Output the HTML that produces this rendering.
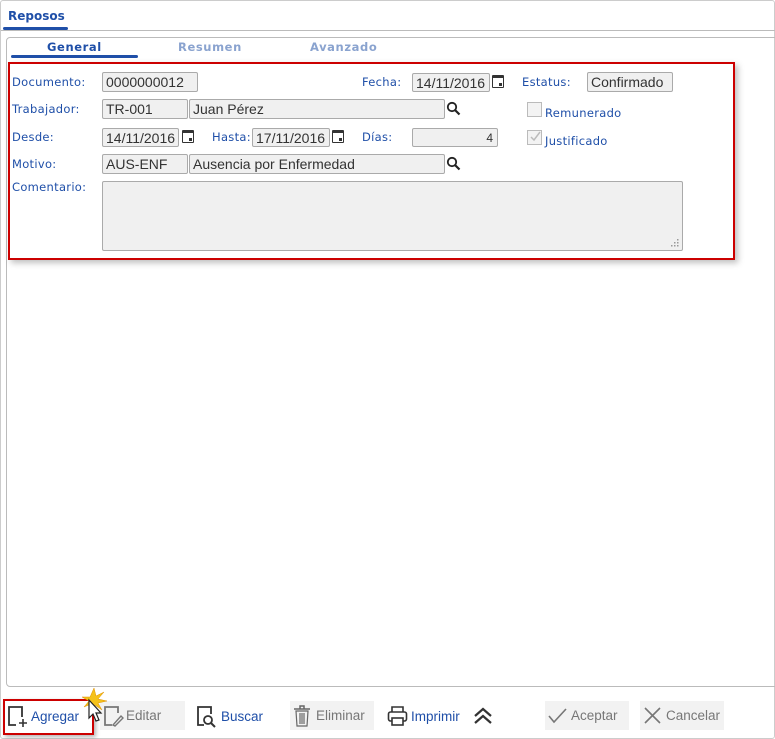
<!DOCTYPE html>
<html><head><meta charset="utf-8"><style>
body{margin:0;width:775px;height:739px;background:#fff;position:relative;overflow:hidden;font-family:"DejaVu Sans",Verdana,sans-serif}
.a{position:absolute}
.lbl{position:absolute;font-size:11.5px;color:#1f4fa8;letter-spacing:.3px}
.in{position:absolute;box-sizing:border-box;border:1px solid #aaa;border-radius:2px;background:#f0f0f0;font-family:"Liberation Sans",Arial,sans-serif;font-size:14px;color:#333;padding:1px 0 0 3px;white-space:nowrap;overflow:hidden}
.cal{position:absolute;width:12px;height:13px;border:1.5px solid #333;border-top-width:3.5px;box-sizing:border-box;border-radius:1px}
.cal:after{content:"";position:absolute;right:1px;bottom:1px;width:3px;height:3px;background:#333}
.btn{position:absolute;top:701px;height:29px;font-family:"Liberation Sans",Arial,sans-serif;font-size:13.5px;line-height:29px}
.gray{background:#f2f2f2;color:#777}
.blue{color:#1f4fa8}
</style></head><body>
<div class="a" style="left:0;top:0;width:773px;height:737px;border:1px solid #ccc;border-radius:3px"></div>
<div class="a" style="left:8px;top:9px;font-size:12px;font-weight:bold;color:#1f4fa8">Reposos</div>
<div class="a" style="left:3px;top:27px;width:65px;height:3px;background:#1f4fa8;border-radius:2px"></div>
<div class="a" style="left:1px;top:30px;width:774px;height:1px;background:#bbb"></div>
<div class="a" style="left:6px;top:37px;width:775px;height:650px;border:1px solid #bbb;border-radius:4px;box-sizing:border-box"></div>
<div class="a" style="left:47px;top:40px;font-size:11.5px;font-weight:bold;color:#1f4fa8;letter-spacing:.6px">General</div>
<div class="a" style="left:178px;top:40px;font-size:11.5px;font-weight:bold;color:#8aa3cf;letter-spacing:.6px">Resumen</div>
<div class="a" style="left:310px;top:40px;font-size:11.5px;font-weight:bold;color:#8aa3cf;letter-spacing:.6px">Avanzado</div>
<div class="a" style="left:11px;top:55px;width:127px;height:3px;background:#1f4fa8;border-radius:2px"></div>
<div class="a" style="left:8px;top:62px;width:727px;height:198px;border:2px solid #c00;box-sizing:border-box;box-shadow:3px 3px 6px rgba(0,0,0,.25)"></div>

<div class="lbl" style="left:12px;top:75px">Documento:</div>
<div class="in" style="left:102px;top:72px;width:96px;height:20px">0000000012</div>
<div class="lbl" style="left:362px;top:75px">Fecha:</div>
<div class="in" style="left:412px;top:73px;width:78px;height:19px">14/11/2016</div>
<div class="cal" style="left:492px;top:75px"></div>
<div class="lbl" style="left:522px;top:75px">Estatus:</div>
<div class="in" style="left:587px;top:72px;width:86px;height:20px">Confirmado</div>

<div class="lbl" style="left:12px;top:102px">Trabajador:</div>
<div class="in" style="left:102px;top:99px;width:86px;height:20px">TR-001</div>
<div class="in" style="left:189px;top:99px;width:256px;height:20px">Juan Pérez</div>
<svg class="a" style="left:446px;top:101px" width="15" height="15"><circle cx="6" cy="6" r="4.2" fill="none" stroke="#222" stroke-width="1.8"/><path d="M9 9 L13.5 13.5" stroke="#222" stroke-width="2.2"/></svg>
<div class="a" style="left:527px;top:102px;width:15px;height:15px;border:1px solid #bbb;box-sizing:border-box;background:#f3f3f3"></div>
<div class="lbl" style="left:545px;top:106px">Remunerado</div>

<div class="lbl" style="left:12px;top:130px">Desde:</div>
<div class="in" style="left:102px;top:128px;width:77px;height:19px">14/11/2016</div>
<div class="cal" style="left:182px;top:130px"></div>
<div class="lbl" style="left:212px;top:130px">Hasta:</div>
<div class="in" style="left:252px;top:128px;width:78px;height:19px">17/11/2016</div>
<div class="cal" style="left:332px;top:130px"></div>
<div class="lbl" style="left:362px;top:130px">Días:</div>
<div class="in" style="left:412px;top:128px;width:86px;height:19px;text-align:right;padding-right:4px;font-size:12px;line-height:17px">4</div>
<div class="a" style="left:527px;top:130px;width:15px;height:15px;border:1px solid #bbb;box-sizing:border-box;background:#f3f3f3"></div>
<svg class="a" style="left:529px;top:130px" width="13" height="13"><path d="M2 7 L5 10 L11 2" fill="none" stroke="#bbb" stroke-width="1.5"/></svg>
<div class="lbl" style="left:545px;top:134px">Justificado</div>

<div class="lbl" style="left:12px;top:157px">Motivo:</div>
<div class="in" style="left:102px;top:154px;width:86px;height:20px">AUS-ENF</div>
<div class="in" style="left:189px;top:154px;width:256px;height:20px">Ausencia por Enfermedad</div>
<svg class="a" style="left:446px;top:156px" width="15" height="15"><circle cx="6" cy="6" r="4.2" fill="none" stroke="#222" stroke-width="1.8"/><path d="M9 9 L13.5 13.5" stroke="#222" stroke-width="2.2"/></svg>

<div class="lbl" style="left:12px;top:180px">Comentario:</div>
<div class="in" style="left:102px;top:181px;width:581px;height:70px"></div>
<svg class="a" style="left:670px;top:238px" width="10" height="10"><g fill="#999"><rect x="7" y="1" width="1.5" height="1.5"/><rect x="4" y="4" width="1.5" height="1.5"/><rect x="7" y="4" width="1.5" height="1.5"/><rect x="1" y="7" width="1.5" height="1.5"/><rect x="4" y="7" width="1.5" height="1.5"/><rect x="7" y="7" width="1.5" height="1.5"/></g></svg>

<div class="a" style="left:3px;top:699px;width:91px;height:36px;border:2px solid #c00;box-sizing:border-box;box-shadow:2px 2px 4px rgba(0,0,0,.3)"></div>
<svg class="a" style="left:7px;top:705px" width="22" height="24"><path d="M9 20 H2 V2 H15 V12" fill="none" stroke="#333" stroke-width="1.8"/><path d="M16 14 V22 M12 18 H20" stroke="#333" stroke-width="1.6"/></svg>
<div class="btn blue" style="left:31px;top:702px">Agregar</div>
<div class="btn gray" style="left:100px;width:85px;padding-left:26px;box-sizing:border-box">Editar</div>
<svg class="a" style="left:103px;top:705px" width="22" height="24"><path d="M9 20 H2 V2 H15 V8" fill="none" stroke="#777" stroke-width="1.8"/><path d="M10 20 L18 11 L20 13 L12 21 Z" fill="none" stroke="#777" stroke-width="1.4"/></svg>
<svg class="a" style="left:80px;top:686px" width="30" height="40"><path d="M14 2 L16 10 L24 6 L18 13 L27 15 L18 17 L22 24 L15 19 L12 26 L11 18 L4 21 L9 15 L2 11 L10 11 Z" fill="#f5c21a" stroke="#e09000" stroke-width=".5"/><path d="M9 14 V32 L13 28 L16 35 L19 34 L16 27 L21 27 Z" fill="#fff" stroke="#222" stroke-width="1.2"/></svg>
<svg class="a" style="left:196px;top:705px" width="22" height="24"><path d="M8 20 H2 V2 H15 V9" fill="none" stroke="#333" stroke-width="1.8"/><circle cx="12" cy="15" r="4" fill="none" stroke="#333" stroke-width="1.8"/><path d="M15 18 L19 22" stroke="#333" stroke-width="2"/></svg>
<div class="btn blue" style="left:221px;top:702px">Buscar</div>
<div class="btn gray" style="left:290px;width:84px;padding-left:26px;box-sizing:border-box">Eliminar</div>
<svg class="a" style="left:293px;top:705px" width="20" height="22"><path d="M1 4 H17 M7 4 V1 H11 V4" fill="none" stroke="#666" stroke-width="1.5"/><path d="M3 6 H15 L14 21 H4 Z M7 8 V19 M9 8 V19 M11 8 V19" fill="none" stroke="#666" stroke-width="1.2"/></svg>
<svg class="a" style="left:387px;top:705px" width="22" height="22"><path d="M5 7 V2 H16 V7" fill="none" stroke="#333" stroke-width="1.6"/><rect x="1.5" y="7" width="18" height="9" rx="2" fill="none" stroke="#333" stroke-width="1.6"/><rect x="5" y="13" width="11" height="7" fill="#fff" stroke="#333" stroke-width="1.6"/></svg>
<div class="btn blue" style="left:411px;top:702px">Imprimir</div>
<svg class="a" style="left:473px;top:707px" width="22" height="18"><path d="M2 9 L10 2 L18 9 M2 16 L10 9 L18 16" fill="none" stroke="#333" stroke-width="2.2"/></svg>
<div class="btn gray" style="left:545px;width:84px;padding-left:26px;box-sizing:border-box">Aceptar</div>
<svg class="a" style="left:548px;top:707px" width="20" height="18"><path d="M1 9 L6 15 L18 2" fill="none" stroke="#777" stroke-width="1.6"/></svg>
<div class="btn gray" style="left:640px;width:84px;padding-left:26px;box-sizing:border-box">Cancelar</div>
<svg class="a" style="left:643px;top:706px" width="20" height="20"><path d="M2 2 L17 17 M17 2 L2 17" stroke="#777" stroke-width="1.6"/></svg>
</body></html>
